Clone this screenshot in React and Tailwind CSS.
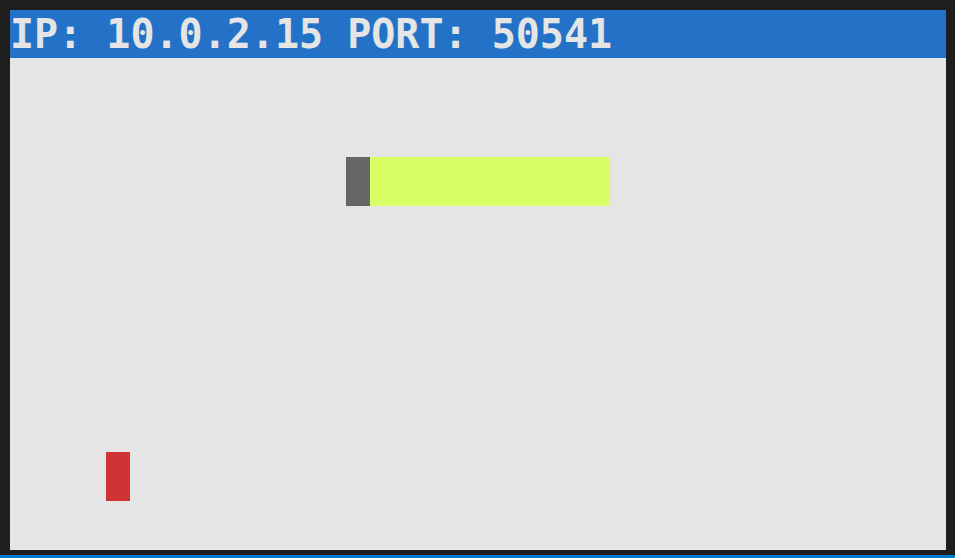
// Terminal snake game screen
const CELL_W = 24;
const CELL_H = 49.15;

const Block = ({ col, row, len = 1, color }) => (
  <div
    className={`absolute ${color}`}
    style={{ left: col * CELL_W, top: Math.round(row * CELL_H) + 1, width: len * CELL_W, height: 49 }}
  />
);

export default function App() {
  return (
    <div className="w-[955px] h-[558px] bg-[#1e1e1e] flex flex-col">
      <div className="flex-1 pl-[10px] pt-[10px]">
        <div className="w-[936px] h-[540px] bg-[#e5e5e5] flex flex-col">
          {/* Barra de estado */}
          <div
            className="h-[48px] bg-[#2472c8] text-[#e5e5e5] font-bold text-[40px] leading-[48px] whitespace-pre"
            style={{ fontFamily: '"DejaVu Sans Mono", monospace' }}
          >
            IP: 10.0.2.15 PORT: 50541
          </div>
          {/* Tablero */}
          <div className="relative flex-1">
            <Block col={14} row={2} color="bg-[#666666]" />
            <Block col={15} row={2} len={10} color="bg-[#d9ff66]" />
            <Block col={4} row={8} color="bg-[#d03333]" />
          </div>
        </div>
      </div>
      <div className="h-[3px] bg-[#007acc]" />
    </div>
  );
}
